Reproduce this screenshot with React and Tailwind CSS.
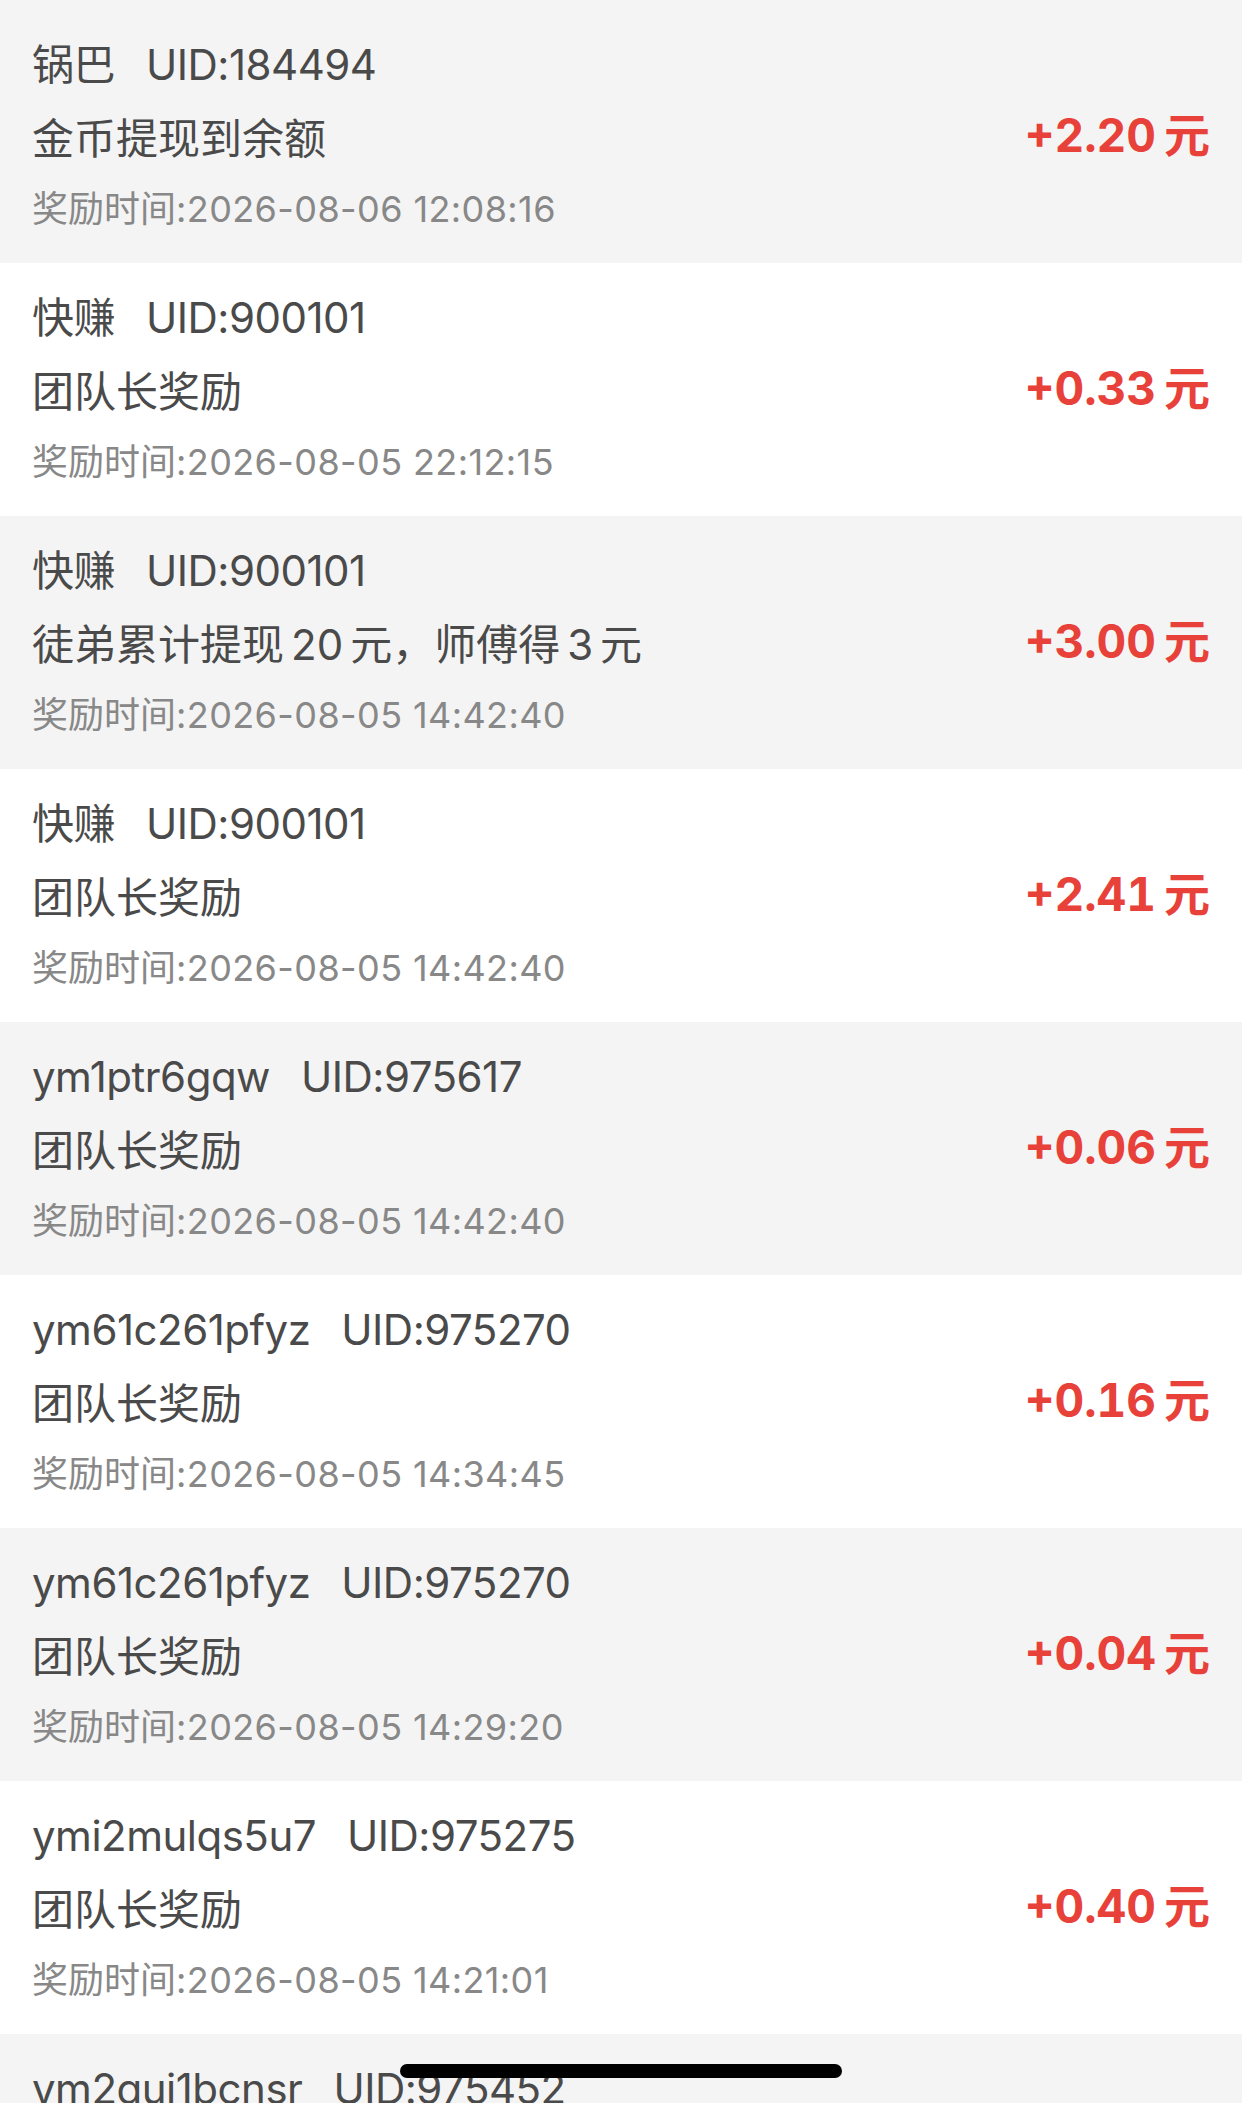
import React from 'react';

const rows = [
  { name: '锅巴', uid: '184494', desc: '金币提现到余额', time: '2026-08-06 12:08:16', amount: '+2.20' },
  { name: '快赚', uid: '900101', desc: '团队长奖励', time: '2026-08-05 22:12:15', amount: '+0.33' },
  { name: '快赚', uid: '900101', desc: null, time: '2026-08-05 14:42:40', amount: '+3.00' },
  { name: '快赚', uid: '900101', desc: '团队长奖励', time: '2026-08-05 14:42:40', amount: '+2.41' },
  { name: 'ym1ptr6gqw', uid: '975617', desc: '团队长奖励', time: '2026-08-05 14:42:40', amount: '+0.06' },
  { name: 'ym61c261pfyz', uid: '975270', desc: '团队长奖励', time: '2026-08-05 14:34:45', amount: '+0.16' },
  { name: 'ym61c261pfyz', uid: '975270', desc: '团队长奖励', time: '2026-08-05 14:29:20', amount: '+0.04' },
  { name: 'ymi2mulqs5u7', uid: '975275', desc: '团队长奖励', time: '2026-08-05 14:21:01', amount: '+0.40' },
  { name: 'ym2gui1bcnsr', uid: '975452', desc: '团队长奖励', time: '2026-08-05 14:12:33', amount: '+0.10' },
];

const font = { fontFamily: 'Inter, "Noto Sans CJK SC", sans-serif' };

// 徒弟累计提现20元 row has the numbers spaced out from the CJK text
function MasterDesc() {
  return (
    <>
      徒弟累计提现<span className="mx-[7px]">20</span>元，师傅得<span className="mx-[7px]">3</span>元
    </>
  );
}

function Row({ item, index }) {
  const bg = index % 2 === 0 ? 'bg-[#f4f4f4]' : 'bg-white';
  return (
    <div className={`${bg} flex items-center justify-between px-[32px] pb-[29px] ${index === 0 ? 'pt-[36px]' : 'pt-[26px]'}`}>
      <div className="flex flex-col">
        <div className="h-[56px] flex items-center text-[42px] text-[#4a4a4a] whitespace-nowrap tracking-[-0.5px]">
          <span>{item.name}</span>
          <span className="ml-[31px]">UID:{item.uid}</span>
        </div>
        <div className="mt-[18px] h-[56px] flex items-center text-[42px] text-[#4a4a4a] whitespace-nowrap">
          {item.desc ?? <MasterDesc />}
        </div>
        <div className="mt-[18px] h-[50px] flex items-center text-[36px] text-[#888888] whitespace-nowrap">
          奖励时间<span className="tracking-[0.4px]">:{item.time}</span>
        </div>
      </div>
      <div className="text-[46px] font-bold text-[#e8413a] whitespace-nowrap tabular-nums">
        {item.amount}
        <span className="ml-[8px]">元</span>
      </div>
    </div>
  );
}

export default function App() {
  return (
    <div className="relative w-[1242px] h-[2103px] overflow-hidden bg-white" style={font}>
      {rows.map((item, i) => (
        <Row key={i} item={item} index={i} />
      ))}
      <div className="absolute left-[400px] top-[2064px] w-[442px] h-[14px] rounded-full bg-black" />
    </div>
  );
}
